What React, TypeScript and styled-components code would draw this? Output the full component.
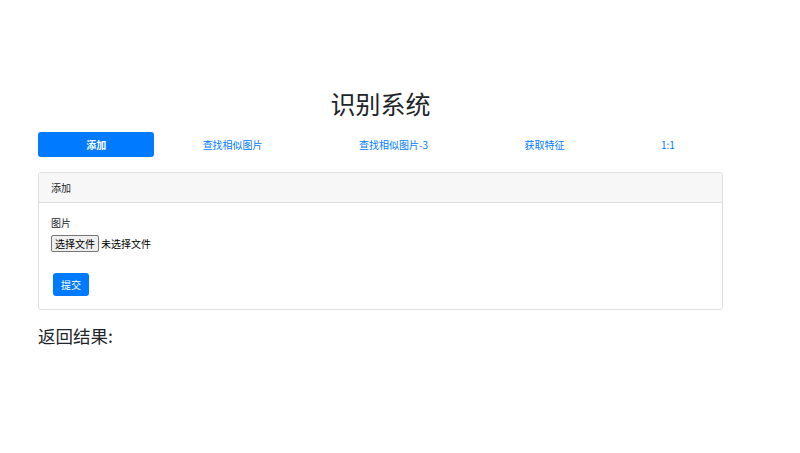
import React from "react";
import styled, { createGlobalStyle } from "styled-components";

const Global = createGlobalStyle`
  html, body { margin: 0; padding: 0; background: #fff; }
  body {
    font-family: "Noto Sans CJK SC", "Noto Sans", "Liberation Sans", sans-serif;
    color: #212529;
    font-size: 10px;
    line-height: 1.5;
  }
  * { box-sizing: border-box; }
`;

const Container = styled.div`
  width: 685px;
  margin-left: 38px;
  padding-top: 86px;
`;

const Title = styled.h1`
  margin: 0 0 12px;
  text-align: center;
  font-size: 25px;
  font-weight: 400;
  line-height: 34px;
  color: #212529;
`;

const Nav = styled.nav`
  display: flex;
  margin-bottom: 15px;
`;

const NavItem = styled.a<{ $active?: boolean }>`
  flex: 1 1 auto;
  text-align: center;
  height: 25px;
  line-height: 25px;
  padding: 0 10px;
  border-radius: 3px;
  font-size: 10px;
  text-decoration: none;
  color: ${(p) => (p.$active ? "#fff" : "#007bff")};
  background: ${(p) => (p.$active ? "#007bff" : "transparent")};
  font-weight: ${(p) => (p.$active ? 700 : 400)};
  cursor: pointer;
`;

const Card = styled.div`
  border: 1px solid #dfdfdf;
  border-radius: 3px;
  overflow: hidden;
`;

const CardHeader = styled.div`
  height: 30px;
  line-height: 29px;
  padding: 0 12px;
  background: #f7f7f7;
  border-bottom: 1px solid #dfdfdf;
  font-size: 10px;
`;

const CardBody = styled.div`
  padding: 12px 12px 13px;
`;

const Label = styled.div`
  font-size: 10px;
  line-height: 15px;
  margin-bottom: 5px;
`;

const FileRow = styled.div`
  display: flex;
  align-items: center;
  gap: 2px;
  height: 17px;
  margin-bottom: 21px;
`;

const FileButton = styled.span`
  display: inline-block;
  height: 17px;
  line-height: 15px;
  padding: 0 3px;
  border: 1px solid #767676;
  border-radius: 2px;
  background: #efefef;
  font-size: 10px;
  color: #000;
`;

const FileText = styled.span`
  font-size: 10px;
  color: #000;
`;

const Submit = styled.button`
  display: block;
  margin-left: 2px;
  width: 36px;
  height: 23px;
  border: none;
  border-radius: 3px;
  background: #007bff;
  color: #fff;
  font-family: inherit;
  font-size: 10px;
  padding: 0;
`;

const Result = styled.h3`
  margin: 15px 0 0;
  font-size: 17.5px;
  font-weight: 400;
  line-height: 21px;
`;

export default function App() {
  const tabs = ["添加", "查找相似图片", "查找相似图片-3", "获取特征", "1:1"];
  return (
    <>
      <Global />
      <Container>
        <Title>识别系统</Title>
        <Nav>
          {tabs.map((t, i) => (
            <NavItem key={t} $active={i === 0}>
              {t}
            </NavItem>
          ))}
        </Nav>
        <Card>
          <CardHeader>添加</CardHeader>
          <CardBody>
            <Label>图片</Label>
            <FileRow>
              <FileButton>选择文件</FileButton>
              <FileText>未选择文件</FileText>
            </FileRow>
            <Submit>提交</Submit>
          </CardBody>
        </Card>
        <Result>返回结果:</Result>
      </Container>
    </>
  );
}
